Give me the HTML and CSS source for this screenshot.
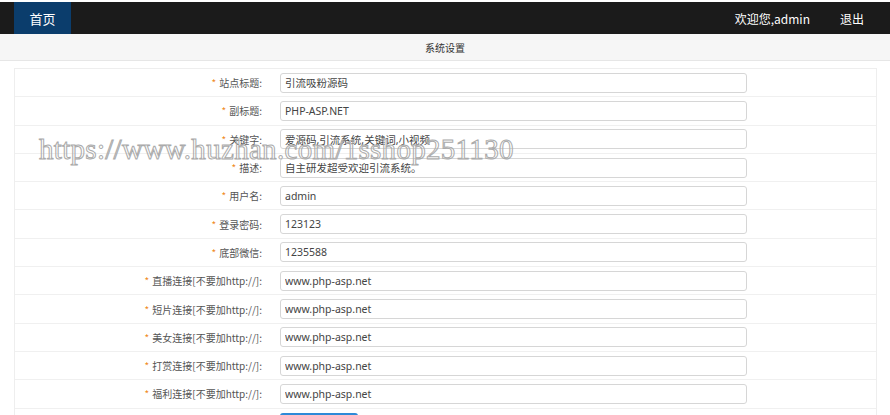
FILE: index.html
```html
<!DOCTYPE html>
<html lang="zh-CN">
<head>
    <meta charset="UTF-8">
    <title>系统设置</title>
    <link rel="stylesheet" href="styles.css">
</head>
<body>
    <div class="topbar">
        <a class="nav-home" href="#">首页</a>
        <div class="nav-right">
            <span class="welcome">欢迎您,admin</span>
            <a class="logout" href="#">退出</a>
        </div>
    </div>

    <div class="subbar">系统设置</div>

    <div class="form-box">
        <div class="row"><label><i>*</i>站点标题:</label><input type="text" value="引流吸粉源码"></div>
        <div class="row"><label><i>*</i>副标题:</label><input type="text" value="PHP-ASP.NET"></div>
        <div class="row"><label><i>*</i>关键字:</label><input type="text" value="爱源码,引流系统,关键词,小视频"></div>
        <div class="row"><label><i>*</i>描述:</label><input type="text" value="自主研发超受欢迎引流系统。"></div>
        <div class="row"><label><i>*</i>用户名:</label><input type="text" value="admin"></div>
        <div class="row"><label><i>*</i>登录密码:</label><input type="text" value="123123"></div>
        <div class="row"><label><i>*</i>底部微信:</label><input type="text" value="1235588"></div>
        <div class="row"><label><i>*</i>直播连接[不要加http://]:</label><input type="text" value="www.php-asp.net"></div>
        <div class="row"><label><i>*</i>短片连接[不要加http://]:</label><input type="text" value="www.php-asp.net"></div>
        <div class="row"><label><i>*</i>美女连接[不要加http://]:</label><input type="text" value="www.php-asp.net"></div>
        <div class="row"><label><i>*</i>打赏连接[不要加http://]:</label><input type="text" value="www.php-asp.net"></div>
        <div class="row"><label><i>*</i>福利连接[不要加http://]:</label><input type="text" value="www.php-asp.net"></div>
        <div class="row row-btn"><label></label><button type="button">保存设置</button></div>
    </div>

    <div class="watermark">https://www.huzhan.com/1sshop251130</div>
</body>
</html>
```

FILE: styles.css
```css
* {
    margin: 0;
    padding: 0;
    box-sizing: border-box;
}

body {
    font-family: "Microsoft YaHei", "Noto Sans CJK SC", "Liberation Sans", sans-serif;
    font-size: 11px;
    color: #555;
    background-color: #fff;
    padding-top: 2px;
    overflow: hidden;
}

.topbar {
    display: flex;
    justify-content: space-between;
    align-items: stretch;
    height: 32px;
    background-color: #1b1b1b;
    padding-left: 14px;
}

.nav-home {
    display: flex;
    align-items: center;
    justify-content: center;
    width: 57px;
    background-color: #0b3d6c;
    color: #fff;
    font-size: 13px;
    text-decoration: none;
}

.nav-right {
    display: flex;
    align-items: center;
    gap: 30px;
    padding-right: 26px;
    color: #fff;
    font-size: 12px;
}

.logout {
    color: #fff;
    text-decoration: none;
}

.subbar {
    height: 27px;
    line-height: 28px;
    text-align: center;
    background-color: #f6f6f6;
    border-bottom: 1px solid #e6e6e6;
    color: #333;
    font-size: 10px;
}

.form-box {
    margin: 7px 14px 0 14px;
    border: 1px solid #eee;
    width: 863px;
}

.row {
    display: flex;
    align-items: center;
    height: 28.3px;
    border-bottom: 1px solid #f0f0f0;
}

.row label {
    width: 251px;
    text-align: right;
    padding-right: 4px;
    color: #555;
    font-size: 10px;
}

.row label i {
    font-style: normal;
    color: #f08a24;
    margin-right: 3px;
}

.row input {
    margin-left: 14px;
    width: 467px;
    height: 20px;
    padding: 0 4px;
    border: 1px solid #d6d6d6;
    border-radius: 3px;
    background-color: #fff;
    color: #444;
    font-family: "Noto Sans", "Noto Sans CJK SC", sans-serif;
    font-size: 10.5px;
}

.row-btn {
    border-bottom: none;
    align-items: flex-start;
    padding-top: 4px;
}

.row-btn button {
    margin-left: 14px;
    width: 78px;
    height: 26px;
    border: none;
    border-radius: 3px;
    background-color: #2e8ad8;
    color: #fff;
    font-size: 11px;
}

.watermark {
    position: absolute;
    left: 39px;
    top: 133px;
    font-family: "Liberation Serif", serif;
    font-size: 29px;
    color: transparent;
    -webkit-text-stroke: 1px #aaa;
    letter-spacing: 0.3px;
    pointer-events: none;
}
```
